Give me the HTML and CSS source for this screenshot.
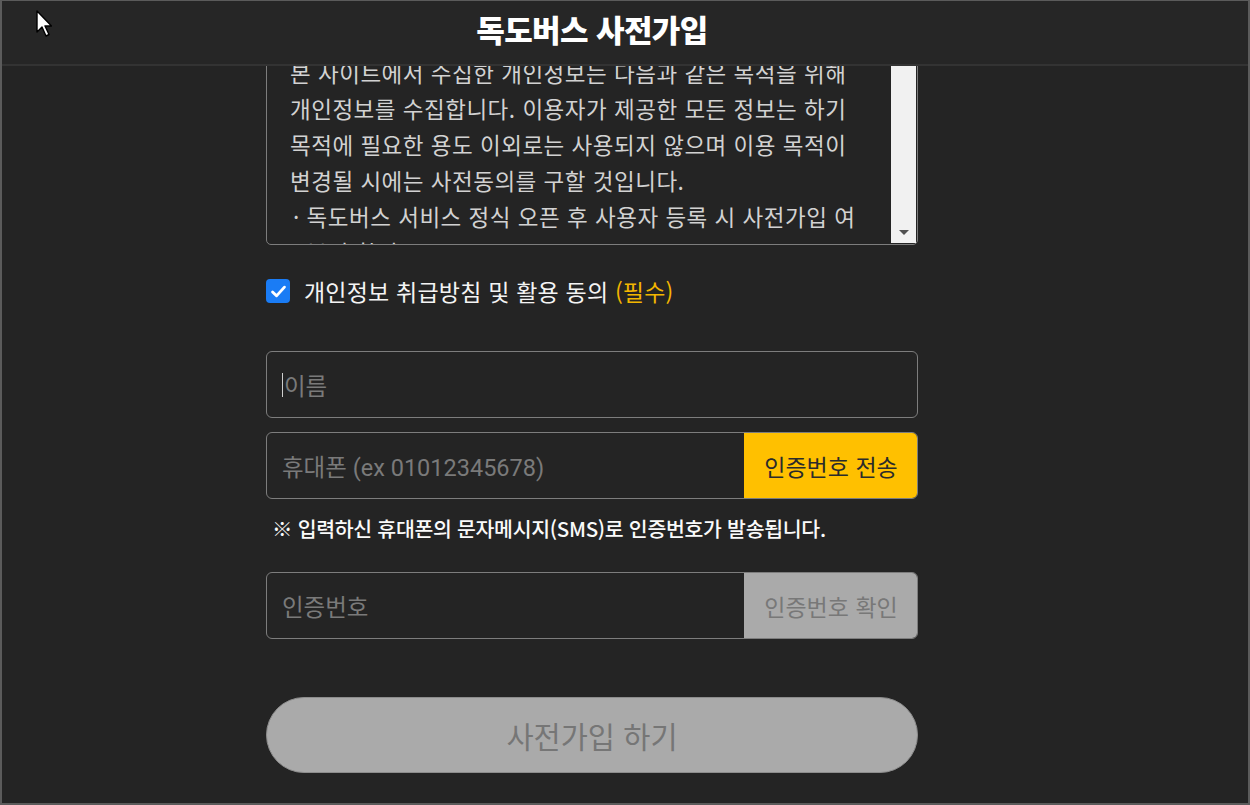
FILE: index.html
```html
<!DOCTYPE html>
<html lang="ko">
<head>
<meta charset="utf-8">
<title>독도버스 사전가입</title>
<link rel="stylesheet" href="styles.css">
</head>
<body>
<div class="frame">
  <header class="topbar">
    <div class="topbar-inner"><h1 class="title">독도버스 사전가입</h1></div>
  </header>
  <main class="main">
    <div class="form">
      <div class="terms">
        <div class="terms-text">
          <p class="tline">본 사이트에서 수집한 개인정보는 다음과 같은 목적을 위해</p>
          <p class="tline">개인정보를 수집합니다. 이용자가 제공한 모든 정보는 하기</p>
          <p class="tline">목적에 필요한 용도 이외로는 사용되지 않으며 이용 목적이</p>
          <p class="tline">변경될 시에는 사전동의를 구할 것입니다.</p>
          <p class="tline bullet">· 독도버스 서비스 정식 오픈 후 사용자 등록 시 사전가입 여</p>
          <p class="tline bullet">&nbsp;&nbsp;부의 확인</p>
        </div>
        <div class="sbar">
          <div class="sbar-arrow"></div>
        </div>
      </div>

      <label class="agree">
        <span class="check">
          <svg viewBox="0 0 24 24" width="19" height="19"><path d="M4.5 12.5 L9.5 17.5 L19.5 6.5" fill="none" stroke="#fff" stroke-width="3.6" stroke-linecap="round" stroke-linejoin="round"/></svg>
        </span>
        <span class="agree-text">개인정보 취급방침 및 활용 동의 <span class="req">(필수)</span></span>
      </label>

      <div class="field name-field">
        <span class="caret"></span><span class="ph">이름</span>
      </div>

      <div class="field row">
        <div class="row-input"><span class="ph">휴대폰 (ex 01012345678)</span></div>
        <div class="row-btn send">인증번호 전송</div>
      </div>

      <p class="note">※ 입력하신 휴대폰의 문자메시지(SMS)로 인증번호가 발송됩니다.</p>

      <div class="field row verify">
        <div class="row-input"><span class="ph">인증번호</span></div>
        <div class="row-btn confirm">인증번호 확인</div>
      </div>

      <div class="submit">사전가입 하기</div>
    </div>
  </main>
  <svg class="cursor" width="16" height="28" viewBox="0 0 16 28"><path d="M1 1 L1 22 L6 17 L10 26 L13 24.5 L9 16 L15.5 16 Z" fill="#fff" stroke="#000" stroke-width="1.4" stroke-linejoin="round"/></svg>
</div>
</body>
</html>
```

FILE: styles.css
```css
* { box-sizing: border-box; }
html, body { margin: 0; padding: 0; background: #242424; }
body {
  font-family: "Noto Sans CJK KR", "Noto Sans", sans-serif;
  color: #fff;
}
.frame {
  position: relative;
  width: 1250px;
  height: 805px;
  border: 2px solid #5b5b5b;
  border-top-width: 1px;
  background: #242424;
  overflow: hidden;
}
.topbar {
  position: absolute;
  left: 0; top: 0; right: 0;
  height: 65px;
  background: #262626;
  border-bottom: 2px solid #333;
  z-index: 5;
  padding-left: 264px;
}
.topbar-inner {
  width: 652px;
  height: 100%;
  display: flex;
  align-items: center;
  justify-content: center;
}
.title {
  margin: 0;
  font-size: 31px;
  font-weight: 900;
  letter-spacing: -0.6px;
  line-height: 1;
  color: #fff;
  padding-bottom: 8px;
}
.main {
  padding-left: 264px;
  padding-top: 29px;
}
.form {
  width: 652px;
  display: flex;
  flex-direction: column;
}
.terms {
  height: 215px;
  border: 1px solid #7d7d7d;
  border-radius: 5px;
  display: flex;
  overflow: hidden;
}
.terms-text {
  flex: 1;
  padding: 23px 0 0 23px;
  overflow: hidden;
}
.tline {
  margin: 0;
  font-size: 22.5px;
  line-height: 36px;
  color: #d2d2d2;
  white-space: nowrap;
  letter-spacing: 0.5px;
}
.tline.bullet { padding-left: 3px; }
.sbar {
  width: 25px;
  margin: 0 1px 1px 0;
  background: #f1f1f1;
  display: flex;
  flex-direction: column;
  justify-content: flex-end;
  align-items: center;
}
.sbar-arrow {
  width: 0; height: 0;
  border-left: 5px solid transparent;
  border-right: 5px solid transparent;
  border-top: 5px solid #505050;
  margin-bottom: 8px;
}
.agree {
  display: flex;
  align-items: center;
  gap: 14px;
  margin-top: 33px;
  height: 26px;
}
.check {
  width: 24px; height: 24px;
  border-radius: 4px;
  background: #1a7cf5;
  display: flex;
  align-items: center;
  justify-content: center;
  flex-shrink: 0;
}
.agree-text {
  font-size: 23px;
  font-weight: 400;
  color: #f4f4f4;
  letter-spacing: 0.2px;
}
.req { color: #f3b600; }
.field {
  height: 67px;
  border: 1px solid #7d7d7d;
  border-radius: 6px;
}
.name-field {
  margin-top: 47px;
  display: flex;
  align-items: center;
  padding-left: 15px;
}
.caret {
  width: 1px;
  height: 24px;
  background: #cfcfcf;
  margin-right: 1px;
}
.ph {
  font-family: "Roboto", "Noto Sans CJK KR", sans-serif;
  font-size: 23.5px;
  color: #7a7a7a;
}
.row {
  margin-top: 14px;
  display: flex;
  overflow: hidden;
}
.row-input {
  flex: 1;
  display: flex;
  align-items: center;
  padding-left: 15px;
}
.row-btn {
  width: 174px;
  display: flex;
  align-items: center;
  justify-content: center;
  font-size: 23px;
  margin: -1px -1px -1px 0;
}
.send { background: #ffc000; color: #2b2b2b; }
.confirm { background: #aaaaaa; color: #787878; }
.note {
  margin: 15px 0 0 6px;
  font-size: 20.5px;
  line-height: 28px;
  font-weight: 500;
  color: #fafafa;
  letter-spacing: -0.3px;
}
.verify { margin-top: 30px; }
.submit {
  margin-top: 58px;
  height: 76px;
  border-radius: 38px;
  background: #aaaaaa;
  border: 1px solid #8d8d8d;
  color: #767676;
  font-size: 29.5px;
  display: flex;
  align-items: center;
  justify-content: center;
}
.cursor {
  position: absolute;
  left: 34px;
  top: 9px;
  z-index: 10;
}
```
